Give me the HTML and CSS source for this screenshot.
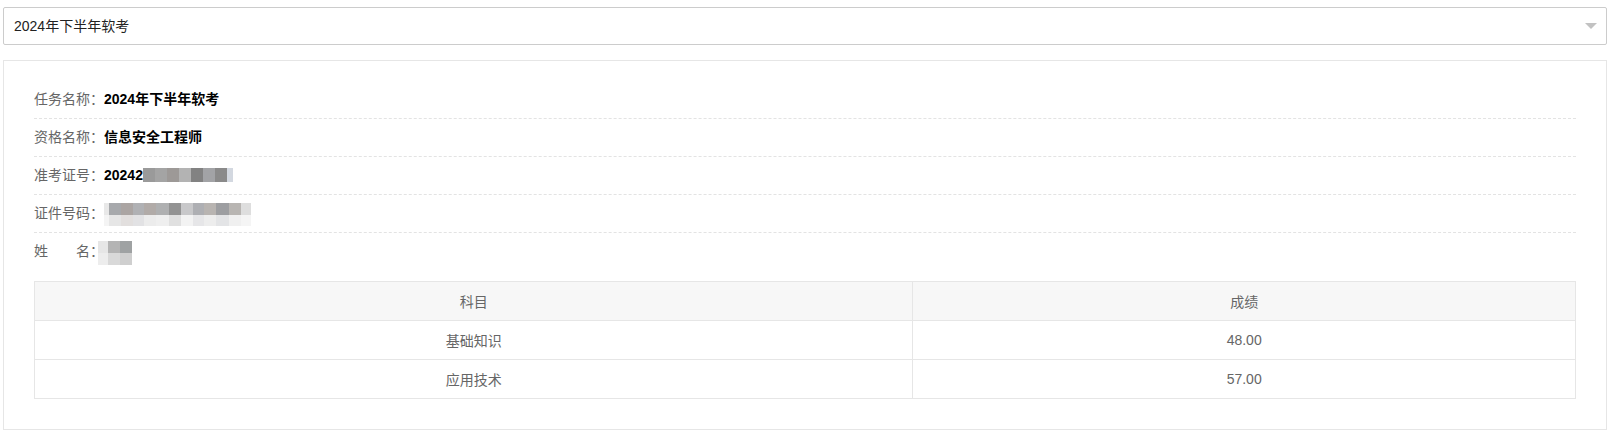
FILE: index.html
```html
<!DOCTYPE html>
<html lang="zh-CN">
<head>
  <meta charset="UTF-8" />
  <title>成绩查询</title>
  <link rel="stylesheet" href="styles.css">
</head>
<body>

<div class="page">
  <!-- 考试任务选择 -->
  <div class="select">
    <span class="select-text">2024年下半年软考</span>
    <i class="select-arrow"></i>
  </div>

  <!-- 成绩信息 -->
  <div class="panel">
    <div class="info-row">
      <span class="label">任务名称：</span><b class="value">2024年下半年软考</b>
    </div>
    <div class="info-row">
      <span class="label">资格名称：</span><b class="value">信息安全工程师</b>
    </div>
    <div class="info-row">
      <span class="label">准考证号：</span><b class="value">20242</b><span class="mosaic one-line"><i style="width:12px;background:#9a9a9a"></i><i style="width:12px;background:#a4a4a4"></i><i style="width:12px;background:#9d9997"></i><i style="width:12px;background:#b3b3b3"></i><i style="width:12px;background:#828282"></i><i style="width:12px;background:#a2a3a6"></i><i style="width:12px;background:#8a8a8a"></i><i style="width:6px;background:#d3d8e0"></i></span>
    </div>
    <div class="info-row">
      <span class="label">证件号码：</span><span class="mosaic two-line">
        <i style="width:5px;background:#e8e8e8"></i><i style="width:5px;background:#f4f4f4"></i>
        <i style="width:12px;background:#a7a9ac"></i><i style="width:12px;background:#e6e6e6"></i>
        <i style="width:12px;background:#aba5a3"></i><i style="width:12px;background:#e2dfde"></i>
        <i style="width:11px;background:#b0b1b4"></i><i style="width:11px;background:#e2e2e4"></i>
        <i style="width:12px;background:#b1aba8"></i><i style="width:12px;background:#ececec"></i>
        <i style="width:13px;background:#afb0b1"></i><i style="width:13px;background:#efefef"></i>
        <i style="width:12px;background:#939393"></i><i style="width:12px;background:#e0e0e0"></i>
        <i style="width:12px;background:#c8c8ca"></i><i style="width:12px;background:#f3f3f3"></i>
        <i style="width:11px;background:#aeafb3"></i><i style="width:11px;background:#e6e6e8"></i>
        <i style="width:12px;background:#b8b4b1"></i><i style="width:12px;background:#ededed"></i>
        <i style="width:13px;background:#9d9ea1"></i><i style="width:13px;background:#e3e4e6"></i>
        <i style="width:12px;background:#b8b5b2"></i><i style="width:12px;background:#f0f0f0"></i>
        <i style="width:10px;background:#dedede"></i><i style="width:10px;background:#f5f5f5"></i>
      </span>
    </div>
    <div class="info-row last">
      <span class="label">姓　　名：</span><span class="mosaic two-line name">
        <i style="width:10px;background:#e6e6e6"></i><i style="width:10px;background:#ededed"></i>
        <i style="width:12px;background:#b4b4b4"></i><i style="width:12px;background:#d9d9d9"></i>
        <i style="width:12px;background:#9fa2a3"></i><i style="width:12px;background:#cfcfcf"></i>
      </span>
    </div>

    <table class="score-table">
      <thead>
        <tr><th class="col-subject">科目</th><th>成绩</th></tr>
      </thead>
      <tbody>
        <tr><td>基础知识</td><td>48.00</td></tr>
        <tr><td>应用技术</td><td>57.00</td></tr>
      </tbody>
    </table>
  </div>
</div>

</body>
</html>
```

FILE: styles.css
```css
body { margin: 0; font-family: "Liberation Sans", "Noto Sans CJK SC", sans-serif; font-size: 14px; color: #333; background: #fff; }
.page { padding: 7px 3px; }

/* 下拉框 */
.select { position: relative; height: 36px; line-height: 36px; border: 1px solid #ccc; border-radius: 2px; padding: 0 10px; }
.select-text { color: #222; }
.select-arrow { position: absolute; right: 9px; top: 15px; width: 0; height: 0; border-left: 6px solid transparent; border-right: 6px solid transparent; border-top: 6px solid #c2c2c2; }

/* 信息面板 */
.panel { margin-top: 15px; border: 1px solid #e6e6e6; padding: 20px 30px 30px; }
.info-row { height: 37px; line-height: 37px; border-bottom: 1px dashed #e3e3e3; white-space: nowrap; }
.info-row.last { border-bottom: none; height: 38px; }
.label { color: #666; }
.value { color: #000; font-weight: bold; }

/* 打码 */
.mosaic { display: inline-grid; vertical-align: middle; grid-auto-flow: column; }
.mosaic i { display: block; }
.mosaic.one-line { grid-template-rows: 14px; position: relative; top: -1px; }
.mosaic.two-line { grid-template-rows: 12px 11px; }
.mosaic.name { grid-template-rows: 12px 12px; margin-left: -6px; position: relative; top: 1px; }

/* 成绩表 */
.score-table { width: 100%; margin-top: 10px; border-collapse: collapse; color: #666; }
.score-table th, .score-table td { height: 38px; padding: 0; border: 1px solid #e6e6e6; text-align: center; font-weight: normal; }
.score-table th { background: #f7f7f7; }
.col-subject { width: 57%; }
```
